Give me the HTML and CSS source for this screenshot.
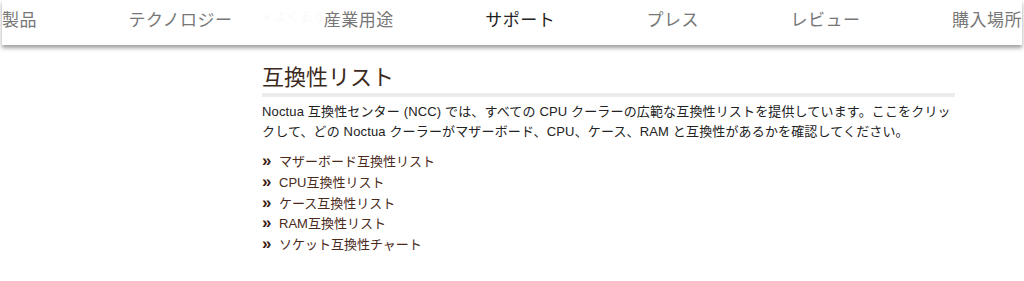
FILE: index.html
```html
<!DOCTYPE html>
<html lang="ja">
<head>
<meta charset="utf-8">
<link rel="stylesheet" href="styles.css">
</head>
<body>
<div class="breadcrumb"><span class="raquo">»</span> よくある質問</div>
<header class="topnav">
  <a class="nav-item">製品</a>
  <a class="nav-item">テクノロジー</a>
  <a class="nav-item">産業用途</a>
  <a class="nav-item active">サポート</a>
  <a class="nav-item">プレス</a>
  <a class="nav-item">レビュー</a>
  <a class="nav-item">購入場所</a>
</header>
<main class="content">
  <h1 class="title">互換性リスト</h1>
  <p class="intro">Noctua 互換性センター (NCC) では、すべての CPU クーラーの広範な互換性リストを提供しています。ここをクリックして、どの Noctua クーラーがマザーボード、CPU、ケース、RAM と互換性があるかを確認してください。</p>
  <ul class="links">
    <li><span class="raquo">»</span><a>マザーボード互換性リスト</a></li>
    <li><span class="raquo">»</span><a>CPU互換性リスト</a></li>
    <li><span class="raquo">»</span><a>ケース互換性リスト</a></li>
    <li><span class="raquo">»</span><a>RAM互換性リスト</a></li>
    <li><span class="raquo">»</span><a>ソケット互換性チャート</a></li>
  </ul>
</main>
</body>
</html>
```
FILE: styles.css
```css
html, body {
  margin: 0;
  padding: 0;
  background: #fff;
}
body {
  font-family: "Liberation Sans", Arial, "Noto Sans CJK JP", sans-serif;
  color: #222;
  width: 1024px;
  height: 281px;
  overflow: hidden;
  position: relative;
}
.breadcrumb {
  padding: 6px 0 0 263px;
  height: 20px;
  font-size: 13px;
  color: #5a3a2a;
}
.breadcrumb .raquo {
  font-weight: bold;
}
.topnav {
  position: absolute;
  top: 0;
  left: 2px;
  right: 2px;
  height: 45px;
  background: rgba(255, 255, 255, 0.97);
  box-shadow: 0 3px 4px rgba(0, 0, 0, 0.38);
  display: flex;
  justify-content: space-between;
  align-items: center;
  box-sizing: border-box;
  padding-bottom: 8px;
}
.nav-item {
  font-family: "Noto Sans CJK JP", sans-serif;
  font-size: 17px;
  color: #777;
  letter-spacing: 0.5px;
}
.nav-item.active {
  color: #222;
}
.content {
  width: 693px;
  margin: 36px 0 0 262px;
}
.title {
  font-family: "Noto Sans CJK JP", sans-serif;
  font-weight: normal;
  font-size: 22px;
  line-height: 26px;
  color: #3d2a1e;
  margin: 0;
  padding-bottom: 5px;
  border-bottom: 4px solid #ececec;
}
.intro {
  font-size: 13px;
  line-height: 20px;
  letter-spacing: 0.15px;
  margin: 5px 0 0 0;
  color: #222;
}
.links {
  list-style: none;
  margin: 9px 0 0 0;
  padding: 0;
  font-size: 13px;
  line-height: 20px;
}
.links li {
  height: 20.75px;
}
.links .raquo {
  display: inline-block;
  width: 17px;
  font-weight: bold;
  color: #3d2012;
  font-size: 17px;
  line-height: 20px;
}
.links a {
  color: #4a2a1a;
}
```
